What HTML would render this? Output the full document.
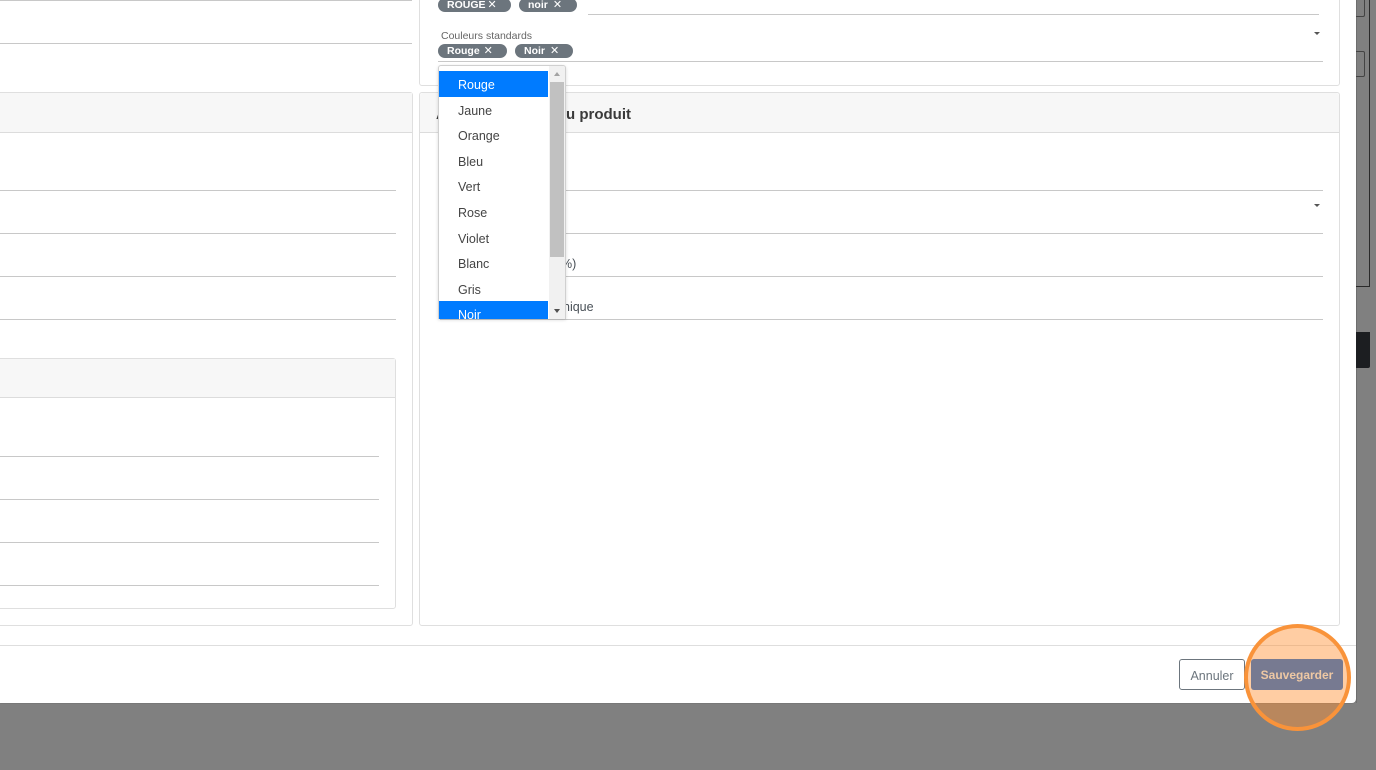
<!DOCTYPE html>
<html lang="fr">
<head>
<meta charset="utf-8">
<title>Produit</title>
<style>
html,body{margin:0;padding:0;width:1376px;height:770px;overflow:hidden;background:#808080;font-family:"Liberation Sans","DejaVu Sans",sans-serif;color:#212529}
div,span{position:absolute;box-sizing:border-box}
.modal{left:0;top:0;width:1356px;height:703px;background:#fff;border-radius:0 0 4px 0;box-shadow:0 0 1px #555}
.card{border:1px solid #dfdfdf;border-radius:3px;background:#fff}
.head{background:#f7f7f7;border-bottom:1px solid #dcdcdc}
.ln{height:1px;background:#c8c8c8}
.chip{height:14px;background:#6c757d;color:#fff;border-radius:7px;font-size:10.5px;font-weight:bold;line-height:14px;padding-left:9px;white-space:nowrap}
.chip i{font-style:normal;font-weight:normal;font-size:11px;margin-left:5px}
.t{white-space:nowrap;font-size:12.5px;color:#495057}
.opt{left:0;width:109px;height:25.6px;font-size:12.5px;line-height:28px;padding-left:19px;color:#444;background:#fff;white-space:nowrap;overflow:hidden}
.sel{background:#007bff;color:#fff}
.caret{width:0;height:0;border-left:3px solid transparent;border-right:3px solid transparent;border-top:3px solid #555}
</style>
</head>
<body>
<div class="modal"></div>

<div class="ln" style="left:0;top:0;width:412px"></div>
<div class="ln" style="left:0;top:43px;width:412px"></div>

<div class="card" style="left:419px;top:-10px;width:921px;height:96px"></div>
<div class="chip" style="left:438px;top:-2px;width:73px">ROUGE<i style="margin-left:2px">✕</i></div>
<div class="chip" style="left:519px;top:-2px;width:58px">noir<i>✕</i></div>
<div class="ln" style="left:588px;top:14px;width:731px"></div>
<div class="t" style="left:441px;top:30px;font-size:10.5px;color:#666">Couleurs standards</div>
<div class="chip" style="left:438px;top:44px;width:69px">Rouge<i style="margin-left:4px">✕</i></div>
<div class="chip" style="left:515px;top:44px;width:58px">Noir<i>✕</i></div>
<div class="ln" style="left:438px;top:61px;width:885px"></div>
<div class="caret" style="left:1314px;top:32px"></div>

<div class="card" style="left:-10px;top:92px;width:423px;height:534px"></div>
<div class="head" style="left:0;top:93px;width:412px;height:40px"></div>
<div class="ln" style="left:0;top:190px;width:396px"></div>
<div class="ln" style="left:0;top:233px;width:396px"></div>
<div class="ln" style="left:0;top:276px;width:396px"></div>
<div class="ln" style="left:0;top:319px;width:396px"></div>

<div class="card" style="left:-10px;top:358px;width:406px;height:251px"></div>
<div class="head" style="left:0;top:359px;width:395px;height:39px"></div>
<div class="ln" style="left:0;top:456px;width:379px"></div>
<div class="ln" style="left:0;top:499px;width:379px"></div>
<div class="ln" style="left:0;top:542px;width:379px"></div>
<div class="ln" style="left:0;top:585px;width:379px"></div>

<div class="card" style="left:419px;top:92px;width:921px;height:534px"></div>
<div class="head" style="left:420px;top:93px;width:919px;height:40px;border-radius:3px 3px 0 0"></div>
<div style="left:436px;top:106px;font-size:15px;font-weight:bold;color:#3a3a3a;white-space:nowrap">A</div>
<div style="left:566px;top:106px;font-size:15px;font-weight:bold;color:#3a3a3a;white-space:nowrap">u produit</div>
<div class="ln" style="left:440px;top:190px;width:883px"></div>
<div class="ln" style="left:440px;top:233px;width:883px"></div>
<div class="ln" style="left:440px;top:276px;width:883px"></div>
<div class="ln" style="left:440px;top:319px;width:883px"></div>
<div class="caret" style="left:1314px;top:204px"></div>
<div class="t" style="left:561px;top:257px">%)</div>
<div class="t" style="left:563px;top:300px">nique</div>

<div style="left:438px;top:65px;width:128px;height:254px;background:#fff;border:1px solid #d0d0d0;border-bottom:0;border-radius:3px 3px 0 0;box-shadow:0 1px 3px rgba(0,0,0,.15);overflow:hidden">
  <div class="opt sel" style="top:5px">Rouge</div>
  <div class="opt" style="top:31px">Jaune</div>
  <div class="opt" style="top:56px">Orange</div>
  <div class="opt" style="top:82px">Bleu</div>
  <div class="opt" style="top:107px">Vert</div>
  <div class="opt" style="top:133px">Rose</div>
  <div class="opt" style="top:159px">Violet</div>
  <div class="opt" style="top:184px">Blanc</div>
  <div class="opt" style="top:210px">Gris</div>
  <div class="opt sel" style="top:235px;height:19px;">Noir</div>
  <div style="left:110px;top:0;width:16px;height:254px;background:#f1f1f1"></div>
  <div style="left:111px;top:16px;width:14px;height:175px;background:#c1c1c1"></div>
  <div style="left:115px;top:6px;width:0;height:0;border-left:3.5px solid transparent;border-right:3.5px solid transparent;border-bottom:4px solid #a3a3a3"></div>
  <div style="left:115px;top:243px;width:0;height:0;border-left:3.5px solid transparent;border-right:3.5px solid transparent;border-top:4px solid #505050"></div>
</div>

<div class="ln" style="left:0;top:645px;width:1356px;background:#dedede"></div>
<div style="left:1179px;top:659px;width:66px;height:31px;border:1px solid #6c757d;border-radius:3px;background:#fff;color:#6c757d;font-size:12.5px;line-height:32px;text-align:center">Annuler</div>

<div style="left:1356px;top:0;width:1px;height:703px;background:#6e6e6e"></div>
<div style="left:1369px;top:0;width:1px;height:287px;background:#2a2a2a"></div>
<div style="left:1356px;top:276px;width:13px;height:11px;border-bottom:1px solid #2a2a2a"></div>
<div style="left:1356px;top:0;width:9px;height:17px;border:1px solid #444;border-left:0;border-top:0;border-radius:0 0 2px 0"></div>
<div style="left:1356px;top:51px;width:9px;height:26px;border:1px solid #444;border-left:0;border-radius:0 2px 2px 0"></div>
<div style="left:1356px;top:332px;width:14px;height:36px;background:#1c1e21;border-radius:0 0 2px 0"></div>

<div style="left:1244px;top:624px;width:107px;height:107px;border-radius:50%;background:rgba(255,145,50,.45);border:4px solid #f9933a"></div>
<div style="left:1251px;top:659px;width:92px;height:31px;border-radius:3px;background:#777a91;color:#eec8a4;font-size:12px;font-weight:bold;line-height:33px;text-align:center">Sauvegarder</div>
</body>
</html>
